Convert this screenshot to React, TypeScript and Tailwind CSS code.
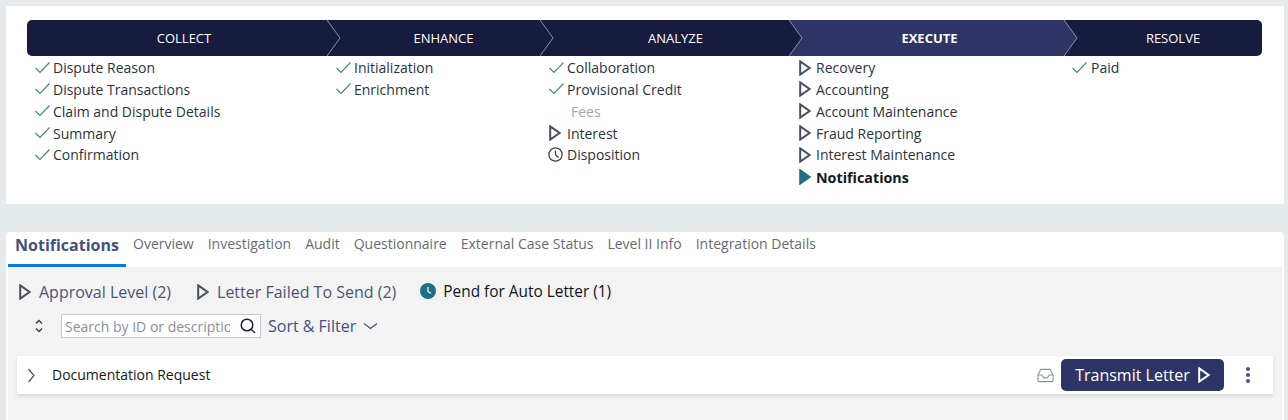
import React from "react";

const font = "font-['Open_Sans',sans-serif]";

function Check() {
  return (
    <svg width="16" height="16" viewBox="0 0 16 16" fill="none" className="shrink-0">
      <path d="M0.5 8 L5 12.5 L14.5 2.5" stroke="#3f8f6f" strokeWidth="1.2" />
    </svg>
  );
}
function Tri({ solid = false, color = "#48505e" }: { solid?: boolean; color?: string }) {
  return (
    <svg width="12" height="16" viewBox="0 0 12 16" fill={solid ? color : "none"} className="shrink-0">
      <path d="M1.2 1.4 L10.6 8 L1.2 14.6 Z" stroke={color} strokeWidth="2" strokeLinejoin="miter" />
    </svg>
  );
}
function Clock() {
  return (
    <svg width="15" height="15" viewBox="0 0 15 15" fill="none" className="-ml-px shrink-0">
      <circle cx="7.5" cy="7.5" r="6.6" stroke="#3b4250" strokeWidth="1.3" />
      <path d="M7.5 3.5 V7.7 L10.5 10.5" stroke="#3b4250" strokeWidth="1.3" />
    </svg>
  );
}
function Chevron({ fill }: { fill: string }) {
  return (
    <svg width="14" height="36" viewBox="0 0 14 36" className="absolute top-0 left-full z-10">
      <path d="M0 0 L13 18 L0 36 Z" fill={fill} />
      <path d="M0 0 L13 18 L0 36" fill="none" stroke="#8b8fa3" strokeWidth="1" />
    </svg>
  );
}

type Item = { t: string; k: "check" | "tri" | "clock" | "none" | "solid" };

function Row({ t, k, iconW }: Item & { iconW: string }) {
  const color = k === "solid" ? "mt-[0.6px] font-bold text-[14.3px] text-[#111827]" : k === "none" ? "text-[#a6a6a6]" : "text-[#2a3342]";
  return (
    <li className={`flex h-[21.8px] items-center ${color}`}>
      <span className={`flex items-center ${k === "none" ? "w-[22px]" : iconW}`}>
        {k === "check" && <Check />}
        {k === "tri" && <Tri />}
        {k === "solid" && <Tri solid color="#1f6e84" />}
        {k === "clock" && <Clock />}
      </span>
      {t}
    </li>
  );
}

const stages: { name: string; w: string; active?: boolean; pad: string; iconW: string; labelPad: string; items: Item[]; round?: string }[] = [
  {
    name: "COLLECT", w: "w-[300px]", pad: "pl-2", iconW: "w-[18px]", labelPad: "pl-[14px]", round: "rounded-l-[5px]",
    items: [
      { t: "Dispute Reason", k: "check" },
      { t: "Dispute Transactions", k: "check" },
      { t: "Claim and Dispute Details", k: "check" },
      { t: "Summary", k: "check" },
      { t: "Confirmation", k: "check" },
    ],
  },
  {
    name: "ENHANCE", w: "w-[213px]", pad: "pl-[9px]", iconW: "w-[18px]", labelPad: "pl-[20px]",
    items: [
      { t: "Initialization", k: "check" },
      { t: "Enrichment", k: "check" },
    ],
  },
  {
    name: "ANALYZE", w: "w-[249px]", pad: "pl-[9px]", iconW: "w-[18px]", labelPad: "pl-[22px]",
    items: [
      { t: "Collaboration", k: "check" },
      { t: "Provisional Credit", k: "check" },
      { t: "Fees", k: "none" },
      { t: "Interest", k: "tri" },
      { t: "Disposition", k: "clock" },
    ],
  },
  {
    name: "EXECUTE", w: "w-[275px]", active: true, pad: "pl-[10px]", iconW: "w-[17px]", labelPad: "pl-[6px]",
    items: [
      { t: "Recovery", k: "tri" },
      { t: "Accounting", k: "tri" },
      { t: "Account Maintenance", k: "tri" },
      { t: "Fraud Reporting", k: "tri" },
      { t: "Interest Maintenance", k: "tri" },
      { t: "Notifications", k: "solid" },
    ],
  },
  {
    name: "RESOLVE", w: "w-[198px]", pad: "pl-2", iconW: "w-[19px]", labelPad: "pl-[20px]", round: "rounded-r-[5px]",
    items: [{ t: "Paid", k: "check" }],
  },
];

const tabs = ["Overview", "Investigation", "Audit", "Questionnaire", "External Case Status", "Level II Info", "Integration Details"];

export default function App() {
  return (
    <div className={`${font} h-[420px] w-[1288px] overflow-hidden bg-[#e5eaed] pt-[6px] pl-[6px] pr-1 text-[14px]`}>
      <section className="h-[198px] bg-white pt-[14px] pl-[21px]">
        <div className="flex">
          {stages.map((s, i) => (
            <div key={s.name} className={s.w}>
              <div
                className={`relative flex h-[36px] items-center justify-center pt-[2px] text-[13px] text-white ${s.labelPad} ${s.active ? "bg-[#2d3567] font-bold" : "bg-[#171c3f]"} ${s.round ?? ""}`}
              >
                {s.name}
                {i < stages.length - 1 && <Chevron fill={s.active ? "#2d3567" : "#171c3f"} />}
              </div>
              <ul className={`${s.pad} pt-[0.8px]`}>
                {s.items.map((it) => (
                  <Row key={it.t} {...it} iconW={s.iconW} />
                ))}
              </ul>
            </div>
          ))}
        </div>
      </section>

      <section className="mt-[28px] h-[188px] rounded-t-[4px] bg-white px-[2px]">
        <div className="flex h-[35px] items-start gap-[7px]">
          <div className="flex h-[35px] w-[118px] items-start justify-center border-b-[3px] border-[#0b78e8] pt-[1px] text-[16px] font-bold text-[#44507f]">
            Notifications
          </div>
          <div className="flex gap-[14px] pt-[1px] text-[14px] text-[#666b75]">
            {tabs.map((t) => (
              <span key={t}>{t}</span>
            ))}
          </div>
        </div>
        <div className="h-[153px] bg-[#f3f3f3] pl-[9px]">
          <div className="flex h-[47px] items-center pt-[2px] pl-[2px] text-[16px] text-[#4b5378]">
            <span className="flex items-center gap-[8px]">
              <Tri />
              Approval Level (2)
            </span>
            <span className="ml-[26px] flex items-center gap-[8px]">
              <Tri />
              Letter Failed To Send (2)
            </span>
            <span className="ml-[24px] flex items-center gap-[7px] text-[15.4px] font-medium text-[#10141c]">
              <svg width="16" height="16" viewBox="0 0 16 16">
                <circle cx="8" cy="8" r="8" fill="#1f6e84" />
                <path d="M8 4 V8.5 L11 10.5" fill="none" stroke="#fff" strokeWidth="1.2" />
              </svg>
              Pend for Auto Letter (1)
            </span>
          </div>
          <div className="flex h-[24px] items-center">
            <span className="flex w-[44px] pl-[18px]">
              <svg width="8" height="14" viewBox="0 0 8 14" fill="none" stroke="#3b4250" strokeWidth="1.5">
                <path d="M1 4.5 L4 1.5 L7 4.5" />
                <path d="M1 9.5 L4 12.5 L7 9.5" />
              </svg>
            </span>
            <div className="flex h-[24px] w-[200px] items-center border border-[#c3c8d6] bg-white pl-[3px]">
              <input
                readOnly
                placeholder="Search by ID or description"
                className="w-[165px] shrink-0 bg-transparent text-[14px] outline-none placeholder:text-[#8a8f9c]"
              />
              <svg width="16" height="16" viewBox="0 0 16 16" fill="none" stroke="#1c2333" strokeWidth="1.5" className="ml-[10px] shrink-0">
                <circle cx="7" cy="7" r="5.8" />
                <path d="M11 11 L15 15" />
              </svg>
            </div>
            <span className="ml-[7px] flex items-center gap-[7px] text-[16px] text-[#44507f]">
              Sort &amp; Filter
              <svg width="15" height="8" viewBox="0 0 15 8" fill="none" stroke="#44507f" strokeWidth="1.3">
                <path d="M1 1.5 L7.5 6.5 L14 1.5" />
              </svg>
            </span>
          </div>
          <div className="mt-[18px] flex h-[38px] w-[1256px] items-center bg-white pl-[11px] pr-[22px] text-[14px] text-[#141820] shadow-[0_2px_4px_rgba(0,0,0,0.12)]">
            <svg width="7" height="15" viewBox="0 0 7 15" fill="none" stroke="#4a5160" strokeWidth="1.2" className="shrink-0">
              <path d="M0.5 1 L6 7.5 L0.5 14" />
            </svg>
            <span className="ml-[17px] flex-1 pb-[2px]">Documentation Request</span>
            <svg width="17" height="15" viewBox="0 0 18 15" fill="none" stroke="#8a8f9c" strokeWidth="1.1" className="mr-[7px] shrink-0">
              <path d="M1 7 L4 1 H14 L17 7 V13 Q17 14 16 14 H2 Q1 14 1 13 Z" />
              <path d="M1 7 H5 L7 10 H11 L13 7 H17" />
            </svg>
            <button className="flex h-[32px] w-[163px] items-center justify-center gap-[8px] rounded-[5px] bg-[#2d3567] text-[16px] text-white">
              Transmit Letter
              <Tri color="#ffffff" />
            </button>
            <span className="ml-[21px] flex w-[6px] flex-col items-center gap-[2.5px]">
              <i className="h-[3.5px] w-[3.5px] rounded-full bg-[#44507f]" />
              <i className="h-[3.5px] w-[3.5px] rounded-full bg-[#44507f]" />
              <i className="h-[3.5px] w-[3.5px] rounded-full bg-[#44507f]" />
            </span>
          </div>
        </div>
      </section>
    </div>
  );
}
